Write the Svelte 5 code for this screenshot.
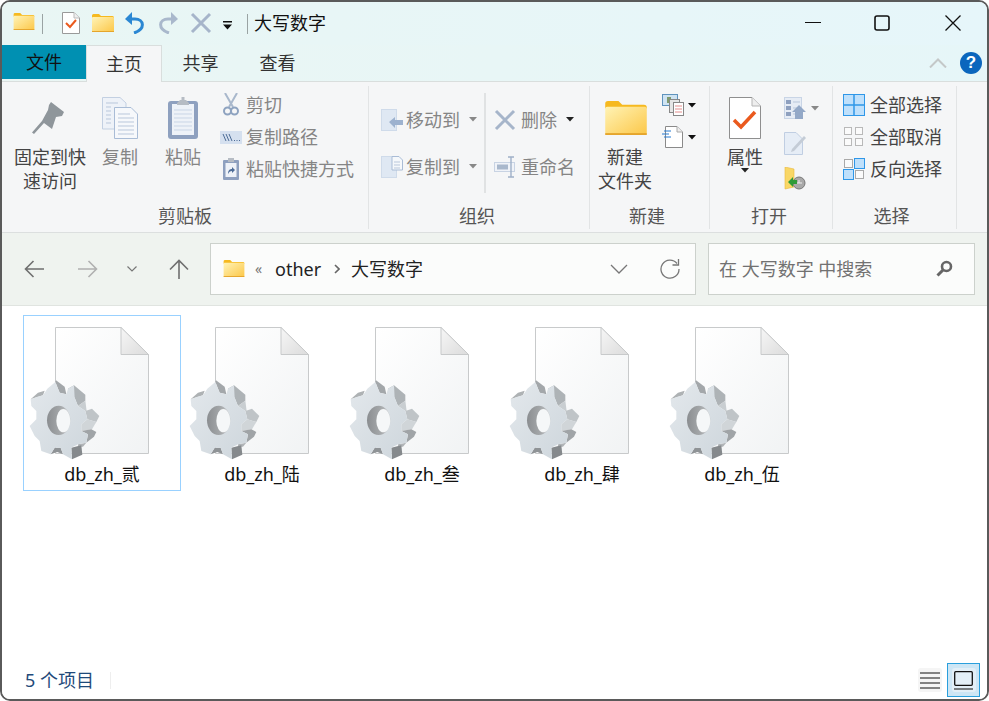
<script>
  const files = ['db_zh_贰', 'db_zh_陆', 'db_zh_叁', 'db_zh_肆', 'db_zh_伍'];
  const face = '8,70 28,62 45,58 58,38 82,18 95,50 115,55 120,38 138,28 140,65 150,90 172,105 178,130 160,145 160,165 180,175 175,200 150,205 130,215 132,250 105,235 98,215 80,215 68,235 40,225 35,195 20,180 5,150 25,130 25,105 10,90';
  const sides = [
    ['8,70 30,50 50,44 45,58', '#aeb2b4'],
    ['82,18 84,13 110,32 115,55 95,50', '#a3a7aa'],
    ['120,38 138,28 172,56 172,74 150,90 140,65', '#aeb3b6'],
    ['150,90 172,74 176,105 172,105', '#c9ced1'],
    ['172,105 192,98 214,120 205,138 178,130', '#bfc4c7'],
    ['178,130 205,138 192,160 160,165 160,145', '#d0d5d8'],
    ['160,165 180,175 175,200 198,182 205,168 190,160', '#a0a4a7'],
    ['150,205 175,200 165,212 150,212', '#b0b4b7'],
    ['130,215 160,208 163,236 132,250', '#85898c'],
    ['68,235 80,215 98,215 105,235 88,228', '#8f9396']
  ];
</script>

{#snippet folder(w, h)}
  <svg class="ic" width={w} height={h} viewBox="0 0 22 18">
    <path d="M0 1.5Q0 0 1.5 0H7L9 2H20.5Q22 2 22 3.5V4H0Z" fill="#f6b91f" />
    <rect x="0" y="3" width="22" height="15" rx="1" fill="url(#gFold)" />
    <rect x="0" y="17" width="22" height="1" fill="#e5a52c" />
  </svg>
{/snippet}

{#snippet crossIcon(w, stroke)}
  <svg class="ic" width={w} height={w} viewBox="0 0 22 22">
    <path d="M2 2 20 20M20 2 2 20" stroke="#a6b5ca" stroke-width={stroke} fill="none" />
  </svg>
{/snippet}

{#snippet caret(color)}
  <svg class="caret" width="8" height="5" viewBox="0 0 8 5"><path d="M0 0H8L4 4.5Z" fill={color} /></svg>
{/snippet}

{#snippet sheet()}
  <svg class="fileicon" width="128" height="140" viewBox="0 0 128 140">
    <path d="M27.5 2.5H93L120.5 29.5V128.5H27.5Z" fill="url(#gPage)" stroke="#c8cacb" />
    <path d="M93 2.5V29.5H120.5Z" fill="url(#gFoldCorner)" stroke="#c8cacb" />
    <g transform="translate(0 51) scale(.3333)">
      {#each sides as s}
        <polygon points={s[0]} fill={s[1]} />
      {/each}
      <polygon points={face} fill="url(#gFace)" />
      <ellipse cx="92" cy="133" rx="35" ry="44" fill="url(#gHole)" />
      <ellipse cx="106" cy="134" rx="21" ry="35" fill="#f5f7f8" />
    </g>
  </svg>
{/snippet}

<svg class="defs" width="0" height="0" aria-hidden="true">
  <defs>
    <linearGradient id="gFold" x1="0" y1="0" x2="1" y2="1">
      <stop offset="0" stop-color="#fff3b5" />
      <stop offset="1" stop-color="#fcc748" />
    </linearGradient>
    <linearGradient id="gPage" x1="0" y1="0" x2="1" y2="1">
      <stop offset="0" stop-color="#ffffff" />
      <stop offset="1" stop-color="#f1f3f4" />
    </linearGradient>
    <linearGradient id="gFoldCorner" x1="0" y1="0" x2="1" y2="1">
      <stop offset="0" stop-color="#f6f6f6" />
      <stop offset="1" stop-color="#dcdcdc" />
    </linearGradient>
    <linearGradient id="gFace" x1="0" y1="0" x2="1" y2="1">
      <stop offset="0" stop-color="#e3e8ec" />
      <stop offset="1" stop-color="#ced6dc" />
    </linearGradient>
    <linearGradient id="gHole" x1="0" y1="0" x2="1" y2="0">
      <stop offset="0" stop-color="#8b8e91" />
      <stop offset=".6" stop-color="#a6a9ab" />
      <stop offset="1" stop-color="#c4c6c8" />
    </linearGradient>
  </defs>
</svg>

<div class="window">
  <header class="titlebar">
    <span class="q q-first">{@render folder(22, 17)}</span>
    <i class="tsep"></i>
    <span class="q q-doc">
      <svg class="ic" width="18" height="22" viewBox="0 0 18 22">
        <path d="M.5.5H12L17.5 6V21.5H.5Z" fill="#fff" stroke="#9a9a9a" />
        <path d="M12 .5V6H17.5" fill="#eee" stroke="#bbb" />
        <path d="M4 11 8 15 14 8" stroke="#ea5a1e" stroke-width="2" fill="none" />
      </svg>
    </span>
    <span class="q q-fold">{@render folder(22, 18)}</span>
    <span class="q q-undo">
      <svg class="ic" width="20" height="22" viewBox="0 0 20 22">
        <path d="M5 7H10C19 7 21 17 9 21" stroke="#2b87d3" stroke-width="3" fill="none" />
        <path d="M0 7 7 0V13Z" fill="#2b87d3" />
      </svg>
    </span>
    <span class="q q-redo">
      <svg class="ic" width="20" height="22" viewBox="0 0 20 22">
        <path d="M15 7H10C1 7-1 17 11 21" stroke="#a9b8cc" stroke-width="3" fill="none" />
        <path d="M20 7 13 0V13Z" fill="#a9b8cc" />
      </svg>
    </span>
    <span class="q q-x">{@render crossIcon(22, 3)}</span>
    <span class="q q-drop">
      <svg class="ic" width="9" height="9" viewBox="0 0 9 9">
        <path d="M0 0H9V1.5H0Z M0 3.5H9L4.5 8.5Z" fill="#111" />
      </svg>
    </span>
    <i class="tsep tsep2"></i>
    <span class="wintitle">大写数字</span>
    <div class="winctl">
      <svg class="ic" width="16" height="16" viewBox="0 0 16 16"><path d="M0 7.5H16" stroke="#111" stroke-width="1.2" /></svg>
      <svg class="ic" width="16" height="16" viewBox="0 0 16 16"><rect x="1" y="1" width="14" height="14" rx="2" fill="none" stroke="#111" stroke-width="1.6" /></svg>
      <svg class="ic w-close" width="16" height="16" viewBox="0 0 16 16"><path d="M.5.5 15.5 15.5M15.5.5 .5 15.5" stroke="#111" stroke-width="1.3" /></svg>
    </div>
  </header>

  <nav class="tabs">
    <span class="tab tab-file">文件</span>
    <span class="tab tab-home">主页</span>
    <span class="tab tab-share">共享</span>
    <span class="tab tab-view">查看</span>
    <div class="tab-right">
      <svg class="ic" width="18" height="10" viewBox="0 0 18 10"><path d="M1 9.5 9 1.5 17 9.5" stroke="#c4c8c8" stroke-width="2" fill="none" /></svg>
      <span class="help">?</span>
    </div>
  </nav>

  <section class="ribbon">
    <div class="group g-clip">
      <div class="gbody">
        <div class="large w-pin">
          <div class="licon">
            <svg class="ic" width="44" height="44" viewBox="0 0 44 44">
              <polygon points="23,6 36,16 34,20 28,21 24,33 16,27 6,38 4,36.5 14,25 20,14 21,9" fill="#8f969b" />
            </svg>
          </div>
          <span class="t dark">固定到快<br />速访问</span>
        </div>
        <div class="large w-copy">
          <div class="licon">
            <svg class="ic" width="36" height="42" viewBox="0 0 36 42">
              <path d="M.5.5H18L24 6V32H.5Z" fill="#eef2f8" stroke="#c3d0e2" />
              <path d="M12.5 10.5H29L35.5 17V41.5H12.5Z" fill="#f6f8fb" stroke="#a9bcd6" />
              <path d="M4 6H16M4 10H9M4 14H9M4 18H9M4 22H9M4 26H9M16 17H28M16 21H32M16 25H32M16 29H32M16 33H32M16 37H32" stroke="#b9c7db" stroke-width="1" />
            </svg>
          </div>
          <span class="t gray">复制</span>
        </div>
        <div class="large w-paste">
          <div class="licon">
            <svg class="ic" width="32" height="44" viewBox="0 0 32 44">
              <rect x="1" y="5" width="30" height="38" rx="3" fill="#8ea0bf" />
              <rect x="5" y="8" width="22" height="31" fill="#eef2f8" />
              <path d="M7 14H25M7 18H25M7 22H25M7 26H25M7 30H25M7 34H25" stroke="#c9d5e6" />
              <path d="M10 7 13 4H14.5V1H17.5V4H19L22 7V9H10Z" fill="#b6bcc4" />
            </svg>
          </div>
          <span class="t gray">粘贴</span>
        </div>
        <div class="smallcol sc-clip">
          <div class="srow">
            <span class="si">
              <svg class="ic" width="16" height="24" viewBox="0 0 16 24">
                <path d="M2 0 10 14M14 0 6 14" stroke="#a9b8cc" stroke-width="2" fill="none" />
                <circle cx="4.5" cy="18" r="3.5" fill="none" stroke="#8ea3c0" stroke-width="2" />
                <circle cx="11.5" cy="18" r="3.5" fill="none" stroke="#8ea3c0" stroke-width="2" />
              </svg>
            </span>
            <span class="t gray">剪切</span>
          </div>
          <div class="srow">
            <span class="si">
              <svg class="ic" width="22" height="13" viewBox="0 0 22 13">
                <rect width="22" height="13" fill="#d5e0ef" />
                <path d="M3 3 6 10M6 3 9 10M9 3 12 10" stroke="#4d6c97" />
                <path d="M14 9.5H20" stroke="#4d6c97" stroke-dasharray="1 1.5" />
              </svg>
            </span>
            <span class="t gray">复制路径</span>
          </div>
          <div class="srow">
            <span class="si">
              <svg class="ic" width="16" height="22" viewBox="0 0 16 22">
                <rect x="0" y="2" width="16" height="20" rx="1" fill="#8ea0bf" />
                <rect x="2.5" y="5" width="11" height="14" fill="#eef2f8" />
                <rect x="5" y="0" width="6" height="4" fill="#b6bcc4" />
                <path d="M5 16C5 12 7 11 9 11V9L12 12 9 15V13C7 13 6 14 5 16Z" fill="#4d6c97" />
              </svg>
            </span>
            <span class="t gray">粘贴快捷方式</span>
          </div>
        </div>
      </div>
      <div class="glabel">剪贴板</div>
    </div>

    <div class="group g-org">
      <div class="gbody">
        <div class="orgcol oc1">
          <div class="orow">
            <svg class="ic" width="22" height="22" viewBox="0 0 22 22">
              <rect x=".5" y=".5" width="15" height="21" fill="#dfe8f3" stroke="#cfdbea" />
              <path d="M8 13 14 8V11H22V16H14V19Z" fill="#9db2cf" />
            </svg>
            <span class="t gray">移动到</span>
            {@render caret('#888')}
          </div>
          <div class="orow">
            <svg class="ic" width="22" height="22" viewBox="0 0 22 22">
              <rect x=".5" y=".5" width="15" height="21" fill="#dfe8f3" stroke="#cfdbea" />
              <path d="M11 .5H18L21.5 4V14H11Z" fill="#f5f8fb" stroke="#a9bcd6" />
              <path d="M13 6H19M13 9H19M13 12H19" stroke="#b9c7db" />
            </svg>
            <span class="t gray">复制到</span>
            {@render caret('#888')}
          </div>
        </div>
        <i class="orgsep"></i>
        <div class="orgcol oc2">
          <div class="orow">
            {@render crossIcon(22, 3)}
            <span class="t gray tw">删除</span>
            {@render caret('#222')}
          </div>
          <div class="orow">
            <svg class="ic" width="22" height="22" viewBox="0 0 22 22">
              <rect x=".5" y="6.5" width="20" height="9" fill="#f0f3f8" stroke="#c8d3e3" />
              <rect x="3" y="8.5" width="11" height="5" fill="#a9b8cc" />
              <path d="M14 1H20M17 1V21M14 21H20" stroke="#9fb0c8" stroke-width="1.4" fill="none" />
            </svg>
            <span class="t gray tw">重命名</span>
          </div>
        </div>
      </div>
      <div class="glabel l4">组织</div>
    </div>

    <div class="group g-new">
      <div class="gbody">
        <div class="large w-new">
          <div class="licon nudge">{@render folder(42, 34)}</div>
          <span class="t dark">新建<br />文件夹</span>
        </div>
        <div class="smallcol sc-new">
          <div class="srow">
            <svg class="ic" width="22" height="22" viewBox="0 0 22 22">
              <rect x=".5" y=".5" width="15" height="11" fill="#cfe3f2" stroke="#5f93bd" />
              <rect x="5" y="3" width="4" height="6" fill="#7f9a6f" />
              <rect x="7.5" y="5.5" width="10" height="13" fill="#e6e6e6" stroke="#888" />
              <rect x="11.5" y="8.5" width="10" height="13" fill="#fff" stroke="#888" />
              <path d="M13 12H20M13 15H20M13 18H20" stroke="#e58e8e" />
            </svg>
            {@render caret('#111')}
          </div>
          <div class="srow">
            <svg class="ic" width="22" height="22" viewBox="0 0 22 22">
              <path d="M3.500.5H15L20.500 6V21.500H3.500Z" fill="#fff" stroke="#8a8a8a" />
              <path d="M15 .5V6H20.500" fill="#eee" stroke="#aaa" />
              <path d="M2 5H9M0 8H7M2 11H9" stroke="#2478cf" stroke-width="1" />
            </svg>
            {@render caret('#111')}
          </div>
        </div>
      </div>
      <div class="glabel l5">新建</div>
    </div>

    <div class="group g-open">
      <div class="gbody">
        <div class="large w-new">
          <div class="licon">
            <svg class="ic" width="32" height="42" viewBox="0 0 32 42">
              <path d="M.5.500H23L31.500 9V41.500H.5Z" fill="#fff" stroke="#8f8f8f" />
              <path d="M23 .500V9H31.500" fill="#eee" stroke="#b5b5b5" />
              <path d="M5 23 12 30 26 15" stroke="#ea5a1e" stroke-width="3.500" fill="none" />
            </svg>
          </div>
          <span class="t dark">属性</span>
          <span class="lcaret">{@render caret('#222')}</span>
        </div>
        <div class="smallcol sc-open">
          <div class="srow">
            <svg class="ic" width="22" height="23" viewBox="0 0 22 23">
              <rect x=".5" y=".5" width="17" height="21" fill="#e6ecf5" stroke="#c9d5e6" />
              <path d="M2 3H7V7H2ZM2 9H7V13H2ZM2 15H7V19H2Z" fill="#8ea0bf" />
              <path d="M9 5H16M9 11H16M9 17H16" stroke="#b9c7db" />
              <path d="M15 8 22 15H19V22H11V15H8Z" fill="#93a8c7" />
            </svg>
            {@render caret('#888')}
          </div>
          <div class="srow">
            <svg class="ic" width="22" height="23" viewBox="0 0 22 23">
              <path d="M.5.500H12L18.500 7V22.500H.5Z" fill="#e6edf6" stroke="#c0cee2" />
              <path d="M8 17 20 4 22 6 10 19 7 20Z" fill="#c4ccd6" />
            </svg>
          </div>
          <div class="srow">
            <svg class="ic" width="22" height="23" viewBox="0 0 22 23">
              <path d="M1 0 10 2V20L1 22Z" fill="#f9d766" stroke="#e9b93c" stroke-width=".6" />
              <circle cx="15" cy="16" r="6" fill="#a9a9a9" stroke="#777" />
              <path d="M12 16H18M15 13V16" stroke="#eee" />
              <path d="M4 15 9 10V13H13V17H9V20Z" fill="#2e9b38" />
            </svg>
          </div>
        </div>
      </div>
      <div class="glabel l4">打开</div>
    </div>

    <div class="group g-sel">
      <div class="gbody">
        <div class="smallcol sc-sel">
          <div class="srow">
            <svg class="ic" width="22" height="22" viewBox="0 0 22 22">
              <rect x=".5" y=".5" width="21" height="21" fill="#bfe0fb" stroke="#2f97e8" />
              <path d="M11 0V22M0 11H22" stroke="#2f97e8" stroke-width="1.500" />
            </svg>
            <span class="t dark">全部选择</span>
          </div>
          <div class="srow">
            <svg class="ic" width="22" height="22" viewBox="0 0 22 22">
              <g fill="#fbfbfb" stroke="#b9b9b9">
                <rect x="1.500" y="1.500" width="7" height="7" /><rect x="12.500" y="1.500" width="7" height="7" />
                <rect x="1.500" y="12.500" width="7" height="7" /><rect x="12.500" y="12.500" width="7" height="7" />
              </g>
            </svg>
            <span class="t dark">全部取消</span>
          </div>
          <div class="srow">
            <svg class="ic" width="22" height="22" viewBox="0 0 22 22">
              <g fill="#fbfbfb" stroke="#a9a9a9">
                <rect x="1.500" y="1.500" width="8" height="8" /><rect x="12.500" y="12.500" width="8" height="8" />
              </g>
              <g fill="#bfe0fb" stroke="#2f97e8">
                <rect x="11.500" y=".5" width="10" height="10" /><rect x=".5" y="11.500" width="10" height="10" />
              </g>
            </svg>
            <span class="t dark">反向选择</span>
          </div>
        </div>
      </div>
      <div class="glabel l6">选择</div>
    </div>
  </section>

  <div class="navbar">
    <svg class="ic n-back" width="20" height="18" viewBox="0 0 20 18"><path d="M20 9H1.500M9.500 1 1.500 9 9.500 17" stroke="#6f6f6f" stroke-width="1.600" fill="none" /></svg>
    <svg class="ic n-fwd" width="20" height="18" viewBox="0 0 20 18"><path d="M0 9H18.500M10.500 1 18.500 9 10.500 17" stroke="#b0b0b0" stroke-width="1.600" fill="none" /></svg>
    <svg class="ic n-down" width="10" height="6" viewBox="0 0 10 6"><path d="M.5.500 5 5 9.500.5" stroke="#777" stroke-width="1.200" fill="none" /></svg>
    <svg class="ic n-up" width="20" height="20" viewBox="0 0 20 20"><path d="M10 20V1.500M1 10.500 10 1.500 19 10.500" stroke="#6f6f6f" stroke-width="1.600" fill="none" /></svg>
    <div class="addr">
      {@render folder(22, 17)}
      <span class="crumb-more">«</span>
      <span class="crumb">other</span>
      <svg class="ic crumb-sep" width="6" height="10" viewBox="0 0 6 10"><path d="M1 1 5 5 1 9" stroke="#666" stroke-width="1.600" fill="none" /></svg>
      <span class="crumb">大写数字</span>
      <svg class="ic a-down" width="18" height="10" viewBox="0 0 18 10"><path d="M1 1 9 9 17 1" stroke="#777" stroke-width="1.300" fill="none" /></svg>
      <svg class="ic a-refresh" width="20" height="20" viewBox="0 0 20 20">
        <path d="M17 4.500A9 9 0 1 0 19 10" stroke="#777" stroke-width="1.300" fill="none" />
        <path d="M18.500 0V6H12.500" stroke="#777" stroke-width="1.300" fill="none" />
      </svg>
    </div>
    <div class="search">
      <span class="s-text">在 大写数字 中搜索</span>
      <svg class="ic" width="17" height="17" viewBox="0 0 17 17">
        <circle cx="10.500" cy="6.500" r="4.500" fill="none" stroke="#666" stroke-width="2.600" />
        <path d="M7 10 1.500 15.500" stroke="#666" stroke-width="3" />
      </svg>
    </div>
  </div>

  <main class="content">
    {#each files as name, i}
      <div class="item" class:selected={i === 0}>
        {@render sheet()}
        <span class="fname">{name}</span>
      </div>
    {/each}
  </main>

  <footer class="status">
    <span class="count">5 个项目</span>
    <i class="ssep"></i>
    <div class="views">
      <span class="vbtn">
        <svg class="ic" width="20" height="17" viewBox="0 0 20 17"><path d="M0 1H20M0 6H20M0 11H20M0 16H20" stroke="#111" stroke-width="1.200" /></svg>
      </span>
      <span class="vbtn active">
        <span class="vinner">
          <svg class="ic" width="19" height="19" viewBox="0 0 19 19">
            <rect x=".7" y=".7" width="17.600" height="13.600" rx="1" fill="none" stroke="#111" stroke-width="1.300" />
            <path d="M0 18H19" stroke="#111" stroke-width="1.200" />
          </svg>
        </span>
      </span>
    </div>
  </footer>
</div>

<style>
  :global(body) { margin: 0; background: #fff; }
  .defs { position: absolute; }
  .window {
    box-sizing: border-box; width: 989px; height: 701px; border: 2px solid #5a5a5a; border-radius: 10px;
    overflow: hidden; display: flex; flex-direction: column; background: #fff;
    font-family: "Noto Sans", "Noto Sans CJK SC", sans-serif; font-size: 18px; color: #333;
  }
  .ic { display: block; flex: none; }

  .titlebar { height: 43px; flex: none; display: flex; align-items: center; background: linear-gradient(90deg, #e9f6f4, #e6f6fa); padding-left: 11px; }
  .q { display: block; flex: none; }
  .q-first { margin-top: -4px; }
  .tsep { width: 1px; height: 20px; background: #9aa3a3; margin-left: 7px; flex: none; }
  .q-doc { margin-left: 19px; margin-top: -2px; }
  .q-fold { margin-left: 12px; margin-top: -2px; }
  .q-undo { margin-left: 11px; margin-top: -2px; }
  .q-redo { margin-left: 13px; margin-top: -2px; }
  .q-x { margin-left: 12px; margin-top: -2px; }
  .q-drop { margin-left: 11px; margin-top: 3px; }
  .tsep2 { margin-left: 15px; }
  .wintitle { margin-left: 6px; color: #111; line-height: 24px; margin-top: -2px; }
  .winctl { margin-left: auto; display: flex; align-items: center; gap: 53px; padding-right: 26px; margin-top: -2px; }
  .w-close { margin-left: 2px; }

  .tabs { height: 37px; flex: none; display: flex; background: linear-gradient(90deg, #eaf6f4, #e6f6f8); border-bottom: 1px solid #d9dedd; box-sizing: border-box; }
  .tab { display: flex; align-items: center; justify-content: center; line-height: 24px; }
  .tab-file { width: 84px; height: 34px; background: #0090b2; color: #111; }
  .tab-home { width: 76px; height: 37px; box-sizing: border-box; background: #f5f6f7; border: 1px solid #d9dedd; border-bottom: 0; }
  .tab-share { width: 77px; height: 36px; }
  .tab-view { width: 77px; height: 36px; }
  .tab-right { margin-left: auto; display: flex; align-items: center; gap: 13px; padding-right: 5px; height: 36px; }
  .help { width: 22px; height: 22px; border-radius: 50%; background: #0b66bd; color: #fff; font-size: 17px; font-weight: 700; line-height: 22px; text-align: center; font-family: "Liberation Sans", sans-serif; }

  .ribbon { height: 151px; flex: none; box-sizing: border-box; display: flex; background: #f5f6f7; border-bottom: 1px solid #dcdfdf; }
  .group { box-sizing: border-box; margin: 4px 0 3px; border-right: 1px solid #e2e4e5; display: flex; flex-direction: column; padding-bottom: 1px; flex: none; }
  .g-clip { width: 367px; }
  .g-org { width: 221px; }
  .g-new { width: 120px; }
  .g-open { width: 123px; }
  .g-sel { width: 124px; }
  .gbody { flex: 1; display: flex; min-height: 0; }
  .glabel { height: 24px; line-height: 24px; text-align: center; color: #555; }
  .l4 { padding-right: 4px; }
  .l5 { padding-right: 5px; }
  .l6 { padding-right: 6px; }
  .t { line-height: 24px; white-space: nowrap; }
  .dark { color: #444; }
  .gray { color: #858585; }
  .large { display: flex; flex-direction: column; align-items: center; padding-top: 8px; flex: none; text-align: center; }
  .licon { height: 47px; padding-bottom: 4px; display: flex; align-items: center; justify-content: center; }
  .nudge { padding-left: 2px; }
  .w-pin { width: 76px; margin-left: 10px; }
  .w-copy { width: 64px; }
  .w-paste { width: 62px; }
  .w-new { width: 70px; }
  .lcaret { display: block; height: 8px; margin-top: -1px; }
  .caret { display: block; flex: none; }
  .smallcol { display: flex; flex-direction: column; flex: none; padding-top: 3px; }
  .srow { display: flex; align-items: center; height: 32px; gap: 5px; }
  .si { width: 22px; display: flex; justify-content: center; flex: none; margin-right: -1px; }
  .sc-clip { margin-left: 6px; }
  .sc-new { margin-left: 2px; }
  .sc-new .srow { gap: 4px; }
  .sc-open { margin-left: 4px; padding-top: 5px; }
  .sc-open .srow { height: 35px; gap: 5px; }
  .sc-sel { margin-left: 10px; }

  .orgcol { padding-top: 10px; display: flex; flex-direction: column; flex: none; }
  .orow { height: 47px; display: flex; align-items: center; gap: 3px; }
  .orow .caret { margin-left: 6px; }
  .oc1 { width: 115px; padding-left: 12px; box-sizing: border-box; }
  .orgsep { width: 2px; height: 100px; margin-top: 7px; background: #e0e2e3; flex: none; }
  .oc2 { margin-left: 8px; }
  .tw { margin-left: 2px; }

  .navbar { height: 73px; flex: none; box-sizing: border-box; background: #eff3ef; border-bottom: 1px solid #e0e4e0; display: flex; align-items: center; padding-bottom: 1px; }
  .n-back { margin-left: 22px; }
  .n-fwd { margin-left: 34px; }
  .n-down { margin-left: 29px; }
  .n-up { margin-left: 32px; }
  .addr, .search { box-sizing: border-box; height: 52px; background: #fbfcfb; border: 1px solid #ccd1cc; display: flex; align-items: center; flex: none; }
  .addr { width: 486px; margin-left: 21px; padding-left: 12px; }
  .crumb-more { color: #777; font-size: 14px; margin-left: 10px; width: 20px; }
  .crumb { color: #222; line-height: 24px; }
  .crumb-sep { margin: 0 11px 0 13px; }
  .a-down { margin-left: auto; }
  .a-refresh { margin: 0 15px 0 32px; }
  .search { width: 267px; margin-left: 12px; padding: 0 21px 0 10px; justify-content: space-between; }
  .s-text { color: #717171; line-height: 24px; }

  .content { flex: 1; min-height: 0; padding: 9px 0 0 21px; display: flex; align-items: flex-start; gap: 2px; background: #fff; }
  .item { box-sizing: border-box; width: 158px; height: 176px; border: 1px solid transparent; display: flex; flex-direction: column; align-items: center; padding-top: 9px; }
  .item.selected { border-color: #99d1ff; }
  .fileicon { display: block; flex: none; margin-right: 20px; }
  .fname { color: #111; line-height: 22px; margin-top: -2px; }

  .status { height: 38px; flex: none; display: flex; align-items: center; padding-left: 23px; background: #fff; }
  .count { color: #1f4a7a; line-height: 24px; }
  .ssep { width: 1px; height: 17px; background: #eeeeee; margin-left: 16px; }
  .views { margin-left: auto; display: flex; align-items: center; gap: 5px; padding-right: 7px; }
  .vbtn { width: 24px; height: 24px; border-radius: 3px; background: #f5f5f5; display: flex; align-items: center; justify-content: center; }
  .vbtn.active { box-sizing: border-box; width: 33px; height: 34px; border: 1px solid #2a9fdc; background: #cde6f5; border-radius: 0; }
  .vinner { width: 24px; height: 24px; background: #e3eff7; border-radius: 3px; display: flex; align-items: center; justify-content: center; }
</style>
